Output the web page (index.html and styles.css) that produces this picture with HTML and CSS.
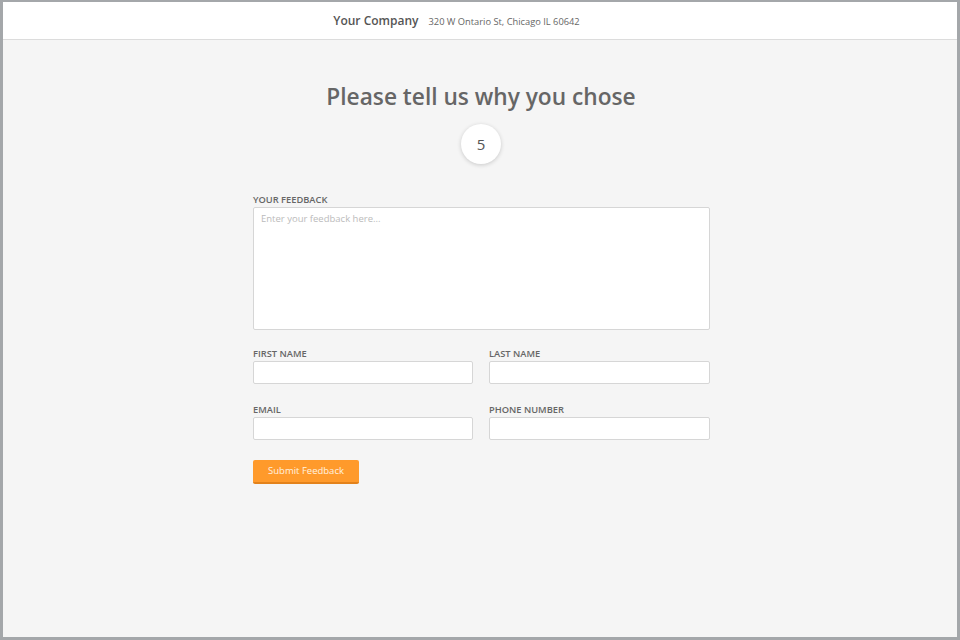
FILE: index.html
```html
<!DOCTYPE html>
<html>
<head>
<meta charset="utf-8">
<link rel="stylesheet" href="styles.css">
</head>
<body>
<div class="frame">
  <header class="topbar">
    <span class="company">Your Company</span>
    <span class="address">320 W Ontario St, Chicago IL 60642</span>
  </header>
  <main class="main">
    <h1 class="title">Please tell us why you chose</h1>
    <div class="score">5</div>
    <form class="form">
      <div class="field">
        <label class="label">YOUR FEEDBACK</label>
        <textarea class="textarea" placeholder="Enter your feedback here..."></textarea>
      </div>
      <div class="row">
        <div class="field">
          <label class="label">FIRST NAME</label>
          <input class="input" type="text">
        </div>
        <div class="field">
          <label class="label">LAST NAME</label>
          <input class="input" type="text">
        </div>
      </div>
      <div class="row">
        <div class="field">
          <label class="label">EMAIL</label>
          <input class="input" type="text">
        </div>
        <div class="field">
          <label class="label">PHONE NUMBER</label>
          <input class="input" type="text">
        </div>
      </div>
      <div class="actions">
        <button class="btn" type="button">Submit Feedback</button>
      </div>
    </form>
  </main>
</div>
</body>
</html>
```

FILE: styles.css
```css
* { box-sizing: border-box; }
html, body { margin: 0; padding: 0; }
body {
  font-family: "Open Sans", "Noto Sans", sans-serif;
  background: #fff;
}
.frame {
  width: 960px;
  height: 640px;
  border: 3px solid #a4a7aa;
  border-top-width: 2px;
  background: #f5f5f5;
  display: flex;
  flex-direction: column;
}
.topbar {
  height: 38px;
  background: #fff;
  border-bottom: 1px solid #dcdcdc;
  display: flex;
  align-items: center;
  justify-content: center;
  gap: 10px;
  padding-right: 47px;
}
.company {
  font-size: 12px;
  font-weight: 600;
  color: #555;
}
.address {
  font-size: 9.3px;
  color: #666;
  padding-top: 1px;
}
.main {
  display: flex;
  flex-direction: column;
  align-items: center;
  padding-top: 40px;
}
.title {
  margin: 0;
  font-size: 22.7px;
  font-weight: 600;
  color: #666;
  line-height: 34px;
  padding-left: 2px;
}
.score {
  margin-top: 10px;
  width: 40px;
  height: 40px;
  border-radius: 50%;
  background: #fff;
  box-shadow: 0 1px 4px rgba(0,0,0,0.18);
  display: flex;
  align-items: center;
  justify-content: center;
  font-size: 15px;
  color: #555;
  margin-left: 2px;
}
.form {
  width: 457px;
  margin-top: 30px;
  margin-left: 3px;
  display: flex;
  flex-direction: column;
  gap: 19px;
}
.row {
  display: grid;
  grid-template-columns: 220px 221px;
  gap: 16px;
  margin-top: -1px;
}
.row + .row {
  margin-top: 1px;
}
.field {
  display: flex;
  flex-direction: column;
}
.label {
  font-size: 9.3px;
  font-weight: 600;
  color: #666;
  line-height: 12px;
  margin-bottom: 1px;
}
.textarea, .input {
  border: 1px solid #d6d6d6;
  border-radius: 2px;
  background: #fff;
  font-family: inherit;
  outline: none;
}
.textarea {
  height: 123px;
  resize: none;
  padding: 4px 7px;
  font-size: 9.5px;
  color: #444;
}
.textarea::placeholder { color: #bbb; }
.input {
  height: 23px;
  width: 100%;
}
.actions {
  margin-top: -2px;
}
.btn {
  width: 106px;
  height: 24px;
  background: #ff9a2b;
  border: none;
  border-bottom: 2px solid #e3821b;
  border-radius: 2px;
  color: #fff3e0;
  font-family: inherit;
  font-size: 9.5px;
  padding: 0;
}
```
